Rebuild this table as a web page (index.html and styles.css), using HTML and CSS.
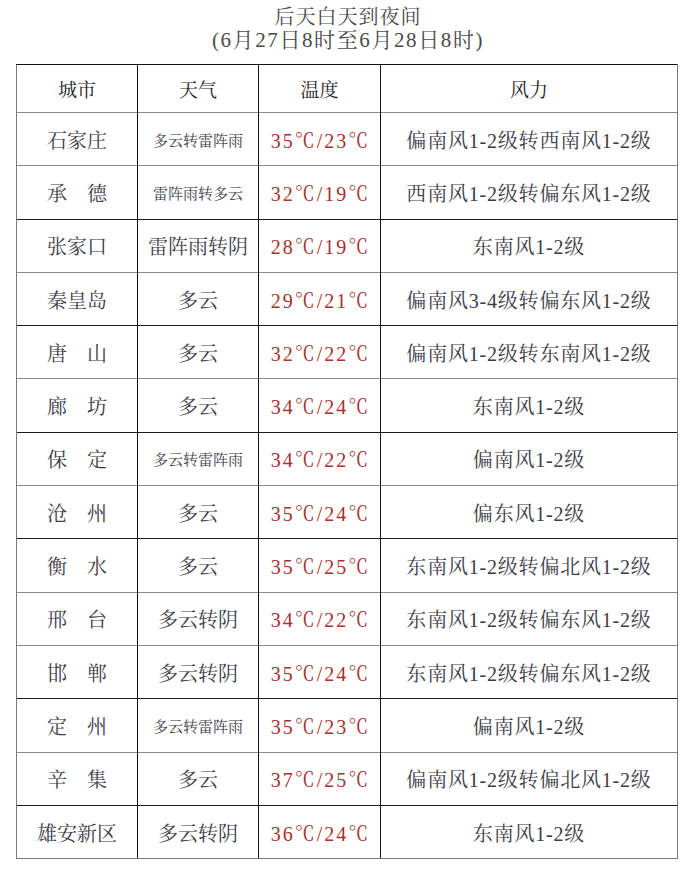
FILE: index.html
```html
<!DOCTYPE html>
<html lang="zh">
<head>
<meta charset="utf-8">
<title>后天白天到夜间</title>
<link rel="stylesheet" href="styles.css">
</head>
<body>
<div class="page">
  <div class="title">
    <div class="t1">后天白天到夜间</div>
    <div class="t2">(6月27日8时至6月28日8时)</div>
  </div>
  <table class="wx">
    <colgroup>
      <col class="c-city"><col class="c-wea"><col class="c-temp"><col class="c-wind">
    </colgroup>
    <thead>
      <tr class="head"><th>城市</th><th>天气</th><th>温度</th><th>风力</th></tr>
    </thead>
    <tbody>
      <tr class="g"><td>石家庄</td><td class="sm">多云转雷阵雨</td><td class="temp">35℃/23℃</td><td>偏南风1-2级转西南风1-2级</td></tr>
      <tr class="g"><td>承　德</td><td class="sm">雷阵雨转多云</td><td class="temp">32℃/19℃</td><td>西南风1-2级转偏东风1-2级</td></tr>
      <tr class="k"><td>张家口</td><td>雷阵雨转阴</td><td class="temp">28℃/19℃</td><td>东南风1-2级</td></tr>
      <tr class="g"><td>秦皇岛</td><td>多云</td><td class="temp">29℃/21℃</td><td>偏南风3-4级转偏东风1-2级</td></tr>
      <tr class="k"><td>唐　山</td><td>多云</td><td class="temp">32℃/22℃</td><td>偏南风1-2级转东南风1-2级</td></tr>
      <tr class="g"><td>廊　坊</td><td>多云</td><td class="temp">34℃/24℃</td><td>东南风1-2级</td></tr>
      <tr class="k"><td>保　定</td><td class="sm">多云转雷阵雨</td><td class="temp">34℃/22℃</td><td>偏南风1-2级</td></tr>
      <tr class="g"><td>沧　州</td><td>多云</td><td class="temp">35℃/24℃</td><td>偏东风1-2级</td></tr>
      <tr class="k"><td>衡　水</td><td>多云</td><td class="temp">35℃/25℃</td><td>东南风1-2级转偏北风1-2级</td></tr>
      <tr class="g"><td>邢　台</td><td>多云转阴</td><td class="temp">34℃/22℃</td><td>东南风1-2级转偏东风1-2级</td></tr>
      <tr class="g"><td>邯　郸</td><td>多云转阴</td><td class="temp">35℃/24℃</td><td>东南风1-2级转偏东风1-2级</td></tr>
      <tr class="k"><td>定　州</td><td class="sm">多云转雷阵雨</td><td class="temp">35℃/23℃</td><td>偏南风1-2级</td></tr>
      <tr class="g"><td>辛　集</td><td>多云</td><td class="temp">37℃/25℃</td><td>偏南风1-2级转偏北风1-2级</td></tr>
      <tr class="k last"><td>雄安新区</td><td>多云转阴</td><td class="temp">36℃/24℃</td><td>东南风1-2级</td></tr>
    </tbody>
  </table>
</div>
</body>
</html>
```

FILE: styles.css
```css
html, body {
  margin: 0;
  padding: 0;
  background: #ffffff;
}
body {
  font-family: "Liberation Serif", "Noto Serif CJK SC", "Noto Sans CJK SC", serif;
  color: #3d3b48;
}
.page {
  width: 690px;
  height: 892px;
  padding: 5px 0 0 16px;
  box-sizing: border-box;
}
.title {
  width: 660px;
  text-align: center;
  color: #4a4a4a;
  margin-left: 2px;
}
.t1 {
  font-size: 20px;
  line-height: 24px;
  letter-spacing: 1px;
}
.t2 {
  font-size: 21px;
  line-height: 22px;
  letter-spacing: 1.6px;
}
.wx {
  margin-top: 13px;
  width: 661px;
  border-collapse: collapse;
  table-layout: fixed;
}
.c-city { width: 121px; }
.c-wea { width: 121px; }
.c-temp { width: 122px; }
.c-wind { width: 297px; }
.wx th, .wx td {
  padding: 0;
  text-align: center;
  vertical-align: middle;
  border-left: 1px solid #111111;
  border-right: 1px solid #111111;
  white-space: nowrap;
  font-size: 20px;
}
.wx th:first-child, .wx td:first-child {
  border-left: 1px solid #7a7a7a;
}
.wx th:last-child, .wx td:last-child {
  border-right: 1px solid #7a7a7a;
}
.head th {
  height: 47px;
  font-weight: normal;
  color: #1e1e1e;
  border-top: 1.5px solid #111111;
  font-size: 19px;
}
.wx tbody tr td {
  height: 52.3px;
}
.wx tbody tr.g td {
  border-top: 1px solid #8a8a8a;
}
.wx tbody tr.k td {
  border-top: 1.5px solid #1a1a1a;
}
.wx tbody tr.last td {
  border-bottom: 1px solid #7a7a7a;
}
.wx td:last-child {
  letter-spacing: 0.8px;
}
.sm {
  font-size: 15px !important;
}
.temp {
  color: #a8302e;
  font-size: 20px;
  letter-spacing: 2px;
  padding-left: 2px !important;
}
```
